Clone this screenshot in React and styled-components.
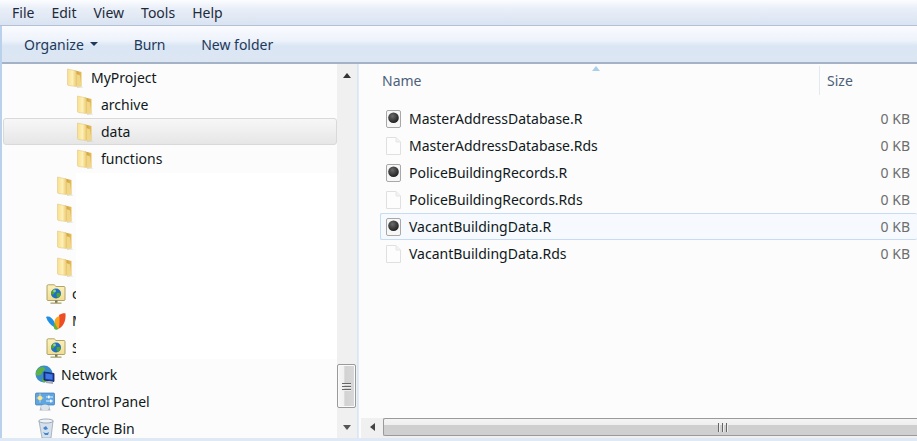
import React, { useId } from 'react';
import styled, { createGlobalStyle } from 'styled-components';

const GlobalStyle = createGlobalStyle`
  html, body {
    margin: 0;
    padding: 0;
    background: #dfe9f5;
    overflow: hidden;
  }
`;

const Window = styled.div`
  width: 917px;
  height: 441px;
  display: flex;
  flex-direction: column;
  box-sizing: border-box;
  padding-left: 2px;
  background: #b9d1ea;
  font-family: "Noto Sans", "Open Sans", sans-serif;
  font-size: 14px;
  overflow: hidden;
`;

const MenuBar = styled.div`
  height: 25px;
  flex: none;
  display: flex;
  align-items: center;
  gap: 17px;
  padding-left: 12px;
  margin-left: -2px;
  background: linear-gradient(#fbfcfe 0, #e9eff8 35%, #d9e3f2 100%);
  border-bottom: 1px solid #b4c1d4;
  color: #1e2a3a;
`;

const Toolbar = styled.div`
  height: 36px;
  flex: none;
  display: flex;
  align-items: center;
  padding-left: 22px;
  gap: 36px;
  background: linear-gradient(#f9fbff 0, #eef3fb 40%, #dbe6f4 55%, #dce6f3 100%);
  border-bottom: 2px solid #a3b2c6;
  color: #1e395b;
`;

const ToolButton = styled.span`
  display: inline-flex;
  align-items: center;
  gap: 6px;
  letter-spacing: ${(p) => p.$tight ? '-0.2px' : '0'};
`;

const Caret = styled.span`
  width: 0;
  height: 0;
  border-left: 4px solid transparent;
  border-right: 4px solid transparent;
  border-top: 4px solid #1e395b;
`;

const Body = styled.div`
  flex: 1;
  min-height: 0;
  display: flex;
`;

const TreePane = styled.div`
  width: 335px;
  flex: none;
  position: relative;
  overflow: hidden;
  background: #fcfcfc;
`;

const TreeRow = styled.div`
  height: 27px;
  box-sizing: border-box;
  display: flex;
  align-items: center;
  gap: 7px;
  padding-left: ${(p) => p.$indent}px;
  color: #101820;
  ${(p) =>
    p.$selected &&
    `
    margin-left: 1px;
    padding-left: ${p.$indent - 2}px;
    border: 1px solid #d9d9d9;
    border-radius: 3px;
    background: linear-gradient(#f7f7f7, #e6e6e6);
  `}
`;

const IconSlot = styled.span`
  width: 18px;
  height: 20px;
  flex: none;
  display: inline-flex;
  align-items: center;
  justify-content: center;

  svg {
    flex: none;
  }
`;

const RedactedBlock = styled.div`
  position: absolute;
  left: 74px;
  top: 109px;
  right: 0;
  height: 186px;
  background: #ffffff;
`;

const VScroll = styled.div`
  width: 20px;
  flex: none;
  display: flex;
  flex-direction: column;
  box-sizing: border-box;
  background: #f0f0f0;
  padding: 0 0 1px;
`;

const ScrollButton = styled.div`
  height: ${(p) => p.$size}px;
  flex: none;
  width: 100%;
  display: flex;
  align-items: center;
  justify-content: center;
`;

const ScrollSpace = styled.div`
  flex: 1;
`;

const UpArrow = styled.span`
  width: 0;
  height: 0;
  border-left: 4.5px solid transparent;
  border-right: 4.5px solid transparent;
  border-bottom: 5px solid #333;
`;

const DownArrow = styled.span`
  width: 0;
  height: 0;
  border-left: 4.5px solid transparent;
  border-right: 4.5px solid transparent;
  border-top: 5px solid #555;
`;

const LeftArrow = styled.span`
  width: 0;
  height: 0;
  border-top: 4.5px solid transparent;
  border-bottom: 4.5px solid transparent;
  border-right: 5px solid #444;
`;

const VThumb = styled.div`
  width: 19px;
  height: 44px;
  flex: none;
  box-sizing: border-box;
  border: 1px solid #9a9a9a;
  border-radius: 2px;
  background: linear-gradient(90deg, #f6f6f6 0, #f0f0f0 35%, #d2d2d2 40%, #d8d8d8 100%);
  box-shadow: inset 0 0 0 1px #fafafa;
  display: flex;
  flex-direction: column;
  align-items: center;
  justify-content: center;
  gap: 2px;
  margin-bottom: 9px;
`;

const Grip = styled.span`
  display: block;
  background: #666;
  width: ${(p) => (p.$vertical ? 1 : 9)}px;
  height: ${(p) => (p.$vertical ? 9 : 1)}px;
  box-shadow: ${(p) => (p.$vertical ? '1px 0 0 #eee' : '0 1px 0 #eee')};
`;

const Splitter = styled.div`
  width: 2px;
  flex: none;
  background: linear-gradient(90deg, #dbe8f6 0, #d5e4f4 50%, #eef4fb 100%);
`;

const Content = styled.div`
  flex: 1;
  min-width: 0;
  display: flex;
  flex-direction: column;
  background: #fcfcfc;
`;

const HeaderRow = styled.div`
  height: 31px;
  flex: none;
  position: relative;
  display: grid;
  grid-template-columns: 460px 1fr;
  color: #4c607a;
`;

const HeaderCell = styled.div`
  display: flex;
  align-items: center;
  padding-left: ${(p) => p.$pad}px;
  height: 29px;
  margin-top: 2px;
  ${(p) => p.$divider && 'border-left: 1px solid #e3e9f1;'}
`;

const SortMark = styled.span`
  position: absolute;
  left: 233px;
  top: 2px;
  width: 0;
  height: 0;
  border-left: 4.5px solid transparent;
  border-right: 4.5px solid transparent;
  border-bottom: 5px solid #a9cfea;
`;

const FileList = styled.div`
  flex: 1;
  padding: 10px 0 0 21px;
`;

const FileRow = styled.div`
  height: 27px;
  box-sizing: border-box;
  display: flex;
  align-items: center;
  gap: 8px;
  padding: 0 7px 0 6px;
  color: #101820;
  ${(p) =>
    p.$active &&
    `
    border: 1px solid #c6dcf4;
    border-right: none;
    border-radius: 2px;
    background: #f6fafe;
    padding-left: 5px;
  `}
`;

const FileIcon = styled.span`
  width: 15px;
  height: 20px;
  flex: none;
  display: inline-flex;
`;

const FileName = styled.span`
  flex: 1;
`;

const FileSize = styled.span`
  color: #6d6d6d;
`;

const HScroll = styled.div`
  height: 20px;
  flex: none;
  display: flex;
  box-sizing: border-box;
  margin-left: 2px;
  padding-bottom: 2px;
  background: #f0f0f0;
`;

const HArrowButton = styled.div`
  width: 22px;
  flex: none;
  display: flex;
  align-items: center;
  justify-content: center;
`;

const HThumb = styled.div`
  flex: 1;
  box-sizing: border-box;
  border: 1px solid #9a9a9a;
  border-right: none;
  border-radius: 2px 0 0 2px;
  background: linear-gradient(#f4f4f4 0, #efefef 35%, #cfcfcf 40%, #d0d0d0 100%);
  display: flex;
  align-items: center;
  justify-content: flex-end;
  gap: 3px;
  padding-right: 190px;
`;

const BottomStrip = styled.div`
  height: 3px;
  flex: none;
  margin-left: -2px;
  background: #dfe9f5;
`;

function Folder() {
  const front = useId();
  const back = useId();
  return (
    <svg width="18" height="20" viewBox="0 0 18 20">
      <defs>
        <linearGradient id={front} x1="0" y1="0" x2="1" y2="0">
          <stop offset="0" stopColor="#f8df8c" />
          <stop offset="0.55" stopColor="#fdf0b8" />
          <stop offset="1" stopColor="#ecc96e" />
        </linearGradient>
        <linearGradient id={back} x1="0" y1="0" x2="1" y2="0">
          <stop offset="0" stopColor="#c99a34" />
          <stop offset="1" stopColor="#e5bf5c" />
        </linearGradient>
      </defs>
      <path d="M9 2.500l6.500 1.500v14.500l-6.500-1z" fill={`url(#${back})`} />
      <path d="M1.500 1l8 1.800c.7.200 1 .7 1 1.500v14.200l-8-1c-.6-.1-1-.5-1-1.100z" fill={`url(#${front})`} stroke="#dcc17a" strokeWidth=".5" />
      <path d="M10.500 6l3.500 1.500 1.500 10.800-5 .7z" fill="#f1d685" />
      <path d="M11 18.700h5l1.500.6-6.500.4z" fill="#b9b9ad" opacity=".6" />
    </svg>
  );
}

function GlobeFolder() {
  const id = useId();
  return (
    <svg width="20" height="22" viewBox="0 0 20 22">
      <defs>
        <linearGradient id={id} x1="0" y1="0" x2="0" y2="1">
          <stop offset="0" stopColor="#fdf2bd" />
          <stop offset="1" stopColor="#f1dc90" />
        </linearGradient>
      </defs>
      <path d="M1 3c0-.8.5-1.200 1.200-1.200h6L10 3.500h8c.6 0 1 .4 1 1v12c0 .6-.4 1-1 1H2c-.6 0-1-.4-1-1z" fill={`url(#${id})`} stroke="#a89a5c" strokeWidth=".9" />
      <rect x="9" y="17.500" width="2.500" height="2.500" fill="#77775a" />
      <rect x="4.500" y="19.500" width="11" height="1.300" fill="#a8a36c" />
      <circle cx="10" cy="10.500" r="5" fill="#1f6fc4" />
      <path d="M7 7c2-1 3 0 3 1s-2 1-2 2.500-2 1-3 0c0-1.500 1-3 2-3.500zM11 10c2-.5 3.500.5 3.500 1.500S12.500 15 11.500 14.500s-1.500-3.500-.5-4.500z" fill="#4fa62f" />
      <circle cx="8.500" cy="8" r="1.400" fill="#bfe3f7" opacity=".6" />
    </svg>
  );
}

function Butterfly() {
  return (
    <svg width="20" height="20" viewBox="0 0 20 20">
      <path d="M0 6c3-1.500 6 .5 8.500 5L8 16C4.500 14 1.500 10.500 0 6z" fill="#1f8fe3" />
      <path d="M8 12l1.500-1 3 7c-1.500 1-3 1-4 0-.7-.8-1-3-.5-6z" fill="#5fb336" />
      <path d="M8.500 10c.5-2.500 2.500-4.500 5-5l1 5-2 8c-2-2-3.500-5-4-8z" fill="#f8a51f" />
      <path d="M13 4c2.500-1.500 5-2 6.500-1.500C20 8 18.500 14 14 17c-.8.500-1.500 1-1.500 1 1-5 1.500-9 .5-14z" fill="#ee4c25" />
    </svg>
  );
}

function NetworkIcon() {
  return (
    <svg width="20" height="20" viewBox="0 0 20 20">
      <circle cx="9" cy="9" r="8.500" fill="#3a8ccc" />
      <path d="M4 3c3-2 6-1 6 1s-3 2-3 4-4 3-6 2c-.5-3 1-5 3-7zM8 13c2-1 4 0 4 2s-2 2.500-4 2c-1-1-1-3 0-4z" fill="#62b240" />
      <path d="M9 7l10 1.500v8L9 15z" fill="#1a3ca6" stroke="#10204f" strokeWidth=".8" />
      <path d="M10.500 8.500l7 1v5.200l-7-1z" fill="#3f78e4" />
      <path d="M11 16l7 .8v2.200L11 18z" fill="#a5adba" />
    </svg>
  );
}

function ControlPanelIcon() {
  return (
    <svg width="20" height="20" viewBox="0 0 20 20">
      <rect x=".5" y="1" width="19" height="12" rx="1" fill="#5fa6e0" stroke="#3a79b5" strokeWidth=".7" />
      <circle cx="5" cy="6" r="2.300" fill="#fbe27c" />
      <path d="M5 1.500v9M1.500 6h7" stroke="#fdf0b0" strokeWidth=".7" />
      <path d="M11 5h7M11 9h7" stroke="#e8f4fd" strokeWidth="1.100" />
      <rect x="13" y="3.600" width="1.600" height="2.800" fill="#fff" />
      <rect x="15" y="7.600" width="1.600" height="2.800" fill="#fff" />
      <path d="M6 13h8l1.500 5.500h-11z" fill="#aeb8c2" />
      <ellipse cx="10" cy="15.500" rx="4" ry="3" fill="#dde3e9" />
    </svg>
  );
}

function RecycleBin() {
  return (
    <svg width="18" height="21" viewBox="0 0 18 21">
      <path d="M3 3h14l-2 17H6z" fill="#d6e0ea" stroke="#8f9dae" strokeWidth=".7" />
      <ellipse cx="10" cy="3" rx="7.300" ry="2" fill="#eef3f8" stroke="#7f8c9c" strokeWidth=".7" />
      <path d="M7 10l3-2 2 3-3 1zM7 14l2 3h3l1-3-2 1H9z" fill="#3f87d0" />
    </svg>
  );
}

function PlainFile() {
  return (
    <svg width="15" height="20" viewBox="0 0 15 20">
      <path d="M.5 1.500h9.500l4.500 4.500v12.500H.5z" fill="#fdfdfd" stroke="#e0e0e0" />
      <path d="M10 1.500V6h4.500" fill="#f2f2f2" stroke="#e6e6e6" />
    </svg>
  );
}

function RFile() {
  const id = useId();
  return (
    <svg width="15" height="20" viewBox="0 0 15 20">
      <defs>
        <radialGradient id={id} cx="0.4" cy="0.35" r="0.7">
          <stop offset="0" stopColor="#6a6a6a" />
          <stop offset="1" stopColor="#1c1c1c" />
        </radialGradient>
      </defs>
      <rect x=".5" y="1.500" width="14" height="17" rx="1.500" fill="#f7f7f7" stroke="#a8a8a8" />
      <circle cx="7.500" cy="8.700" r="5.300" fill={`url(#${id})`} />
    </svg>
  );
}

const treeRows = [
  { label: 'MyProject', indent: 64, icon: <Folder /> },
  { label: 'archive', indent: 74, icon: <Folder /> },
  { label: 'data', indent: 74, icon: <Folder />, selected: true },
  { label: 'functions', indent: 74, icon: <Folder /> },
  { label: '', indent: 54, icon: <Folder /> },
  { label: '', indent: 54, icon: <Folder /> },
  { label: '', indent: 54, icon: <Folder /> },
  { label: '', indent: 54, icon: <Folder /> },
  { label: 'c', indent: 45, icon: <GlobeFolder /> },
  { label: 'M', indent: 45, icon: <Butterfly /> },
  { label: 'S', indent: 45, icon: <GlobeFolder /> },
  { label: 'Network', indent: 34, icon: <NetworkIcon /> },
  { label: 'Control Panel', indent: 34, icon: <ControlPanelIcon /> },
  { label: 'Recycle Bin', indent: 34, icon: <RecycleBin /> },
];

const files = [
  { name: 'MasterAddressDatabase.R', r: true },
  { name: 'MasterAddressDatabase.Rds' },
  { name: 'PoliceBuildingRecords.R', r: true },
  { name: 'PoliceBuildingRecords.Rds' },
  { name: 'VacantBuildingData.R', r: true, active: true },
  { name: 'VacantBuildingData.Rds' },
];

export default function App() {
  return (
    <>
      <GlobalStyle />
      <Window>
        <MenuBar>
          <span>File</span>
          <span>Edit</span>
          <span>View</span>
          <span>Tools</span>
          <span>Help</span>
        </MenuBar>
        <Toolbar>
          <ToolButton>
            Organize <Caret />
          </ToolButton>
          <ToolButton $tight>Burn</ToolButton>
          <ToolButton>New folder</ToolButton>
        </Toolbar>
        <Body>
          <TreePane>
            {treeRows.map((row, i) => (
              <TreeRow key={i} $indent={row.indent} $selected={row.selected}>
                <IconSlot>{row.icon}</IconSlot>
                <span>{row.label}</span>
              </TreeRow>
            ))}
            <RedactedBlock />
          </TreePane>
          <VScroll>
            <ScrollButton $size={22}>
              <UpArrow />
            </ScrollButton>
            <ScrollSpace />
            <VThumb>
              <Grip />
              <Grip />
              <Grip />
            </VThumb>
            <ScrollButton $size={20}>
              <DownArrow />
            </ScrollButton>
          </VScroll>
          <Splitter />
          <Content>
            <HeaderRow>
              <HeaderCell $pad={23}>Name</HeaderCell>
              <HeaderCell $pad={7} $divider>
                Size
              </HeaderCell>
              <SortMark />
            </HeaderRow>
            <FileList>
              {files.map((file) => (
                <FileRow key={file.name} $active={file.active}>
                  <FileIcon>{file.r ? <RFile /> : <PlainFile />}</FileIcon>
                  <FileName>{file.name}</FileName>
                  <FileSize>0 KB</FileSize>
                </FileRow>
              ))}
            </FileList>
            <HScroll>
              <HArrowButton>
                <LeftArrow />
              </HArrowButton>
              <HThumb>
                <Grip $vertical />
                <Grip $vertical />
                <Grip $vertical />
              </HThumb>
            </HScroll>
          </Content>
        </Body>
        <BottomStrip />
      </Window>
    </>
  );
}
